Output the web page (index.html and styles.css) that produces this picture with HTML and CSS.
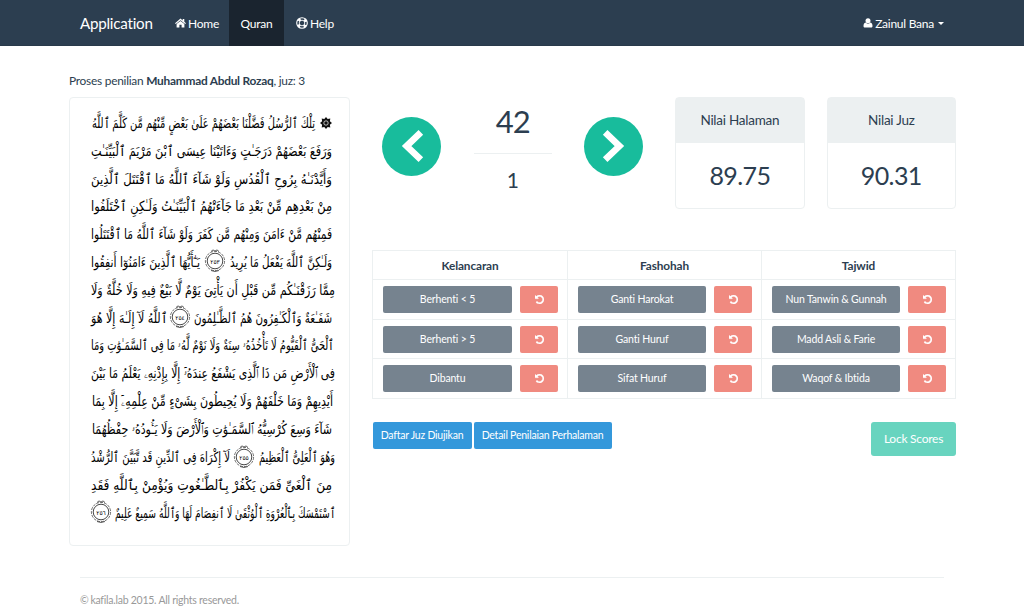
FILE: index.html
```
<!DOCTYPE html>
<html lang="id">
<head>
<meta charset="utf-8">
<title>Application</title>
<link rel="stylesheet" href="styles.css">
</head>
<body>
<svg class="defs" aria-hidden="true">
  <symbol id="undo" viewBox="0 128 1536 1536"><path fill="#fff" stroke="#fff" stroke-width="50" d="M1536 896q0 156-61 298t-164 245-245 164-298 61q-172 0-327-72.500t-264-204.500q-7-10-6.500-22.500t8.500-20.500l137-138q10-9 25-9 16 2 23 12 73 95 179 147t225 52q104 0 198.500-40.500t163.500-109.500 109.500-163.500 40.500-198.500-40.500-198.500-109.500-163.500-163.500-109.500-198.500-40.500q-98 0-188 35.500t-160 101.500l137 138q31 30 14 69-17 40-59 40h-448q-26 0-45-19t-19-45v-448q0-42 40-59 39-17 69 14l130 129q107-101 244.500-156.500t284.500-55.500q156 0 298 61t245 164 164 245 61 298z"/></symbol>
  <symbol id="ayah" viewBox="-11 -12 22 24"><g fill="none" stroke="#333"><circle r="7.800" stroke-width=".9"/><circle r="9.600" stroke-width=".7" stroke-dasharray="3 1"/><path d="M-4-9.500l2-1.600 2 1.200 2-1.200 2 1.600M-4 9.500l4 1 4-1" stroke-width=".8"/></g></symbol>
</svg>
<nav class="navbar">
  <a class="brand">Application</a>
  <a class="nav-item home"><svg class="icon-home" viewBox="0 0 11 10"><path d="M5.500.5L0 5.200l.8.900L5.500 2.200l4.700 3.900.8-.9-1.700-1.500V.9H7.700v1.500z"/><path d="M1.600 6.100l3.900-3.200 3.900 3.200v3.400H6.600V6.800H4.400v2.700H1.600z"/></svg>Home</a>
  <a class="nav-item active">Quran</a>
  <a class="nav-item help"><svg class="icon-help" viewBox="0 0 12 12"><circle cx="6" cy="6" r="4" fill="none" stroke="#fff" stroke-width="2.800" stroke-dasharray="2.500 3.783" stroke-dashoffset="-1.890"/><circle cx="6" cy="6" r="5.300" fill="none" stroke="#fff" stroke-width="1.100"/><circle cx="6" cy="6" r="2.800" fill="none" stroke="#fff" stroke-width=".9"/></svg>Help</a>
  <a class="nav-item user"><svg class="icon-user" viewBox="0 0 9 10"><circle cx="4.500" cy="2.800" r="2.500"/><path d="M2 4.600C.6 5 0 6.400 0 8c0 1 .6 1.600 1.500 1.600h6C8.400 9.600 9 9 9 8c0-1.600-.6-3-2-3.400-1.300 1.500-3.700 1.500-5 0z"/></svg>Zainul Bana<span class="caret"></span></a>
</nav>
<main class="container">
  <p class="lead">Proses penilian <b>Muhammad Abdul Rozaq</b>, juz: 3</p>
  <div class="columns">
    <section class="page-card">
      <svg class="mushaf" width="279" height="447" viewBox="70 98 279 447" direction="rtl">
        <g stroke="#111" fill="none" transform="translate(326 123)"><path d="M0-6l1.700 2 2.600-.4-.4 2.600L6 0 3.900 1.800l.4 2.600-2.600-.4L0 6l-1.700-2-2.600.4.400-2.600L-6 0l2.100-1.800-.4-2.600 2.600.4z" fill="#111" stroke="none"/><circle r="2.200" stroke="#fff" stroke-width=".7"/></g>
        <text x="315" y="128" textLength="223" lengthAdjust="spacingAndGlyphs">تِلْكَ ٱلرُّسُلُ فَضَّلْنَا بَعْضَهُمْ عَلَىٰ بَعْضٍ مِّنْهُم مَّن كَلَّمَ ٱللَّهُ</text>
        <text x="332" y="156" textLength="241" lengthAdjust="spacingAndGlyphs">وَرَفَعَ بَعْضَهُمْ دَرَجَـٰتٍ وَءَاتَيْنَا عِيسَى ٱبْنَ مَرْيَمَ ٱلْبَيِّنَـٰتِ</text>
        <text x="332" y="184" textLength="241" lengthAdjust="spacingAndGlyphs">وَأَيَّدْنَـٰهُ بِرُوحِ ٱلْقُدُسِ وَلَوْ شَآءَ ٱللَّهُ مَا ٱقْتَتَلَ ٱلَّذِينَ</text>
        <text x="332" y="211" textLength="241" lengthAdjust="spacingAndGlyphs">مِنْ بَعْدِهِم مِّنْ بَعْدِ مَا جَآءَتْهُمُ ٱلْبَيِّنَـٰتُ وَلَـٰكِنِ ٱخْتَلَفُوا</text>
        <text x="332" y="239" textLength="241" lengthAdjust="spacingAndGlyphs">فَمِنْهُم مَّنْ ءَامَنَ وَمِنْهُم مَّن كَفَرَ وَلَوْ شَآءَ ٱللَّهُ مَا ٱقْتَتَلُوا</text>
        <text x="332" y="267" textLength="102" lengthAdjust="spacingAndGlyphs">وَلَـٰكِنَّ ٱللَّهَ يَفْعَلُ مَا يُرِيدُ</text>
        <text x="200" y="267" textLength="109" lengthAdjust="spacingAndGlyphs">يَـٰٓأَيُّهَا ٱلَّذِينَ ءَامَنُوٓا أَنفِقُوا</text>
        <text x="335" y="295" textLength="244" lengthAdjust="spacingAndGlyphs">مِمَّا رَزَقْنَـٰكُم مِّن قَبْلِ أَن يَأْتِىَ يَوْمٌ لَّا بَيْعٌ فِيهِ وَلَا خُلَّةٌ وَلَا</text>
        <text x="332" y="323" textLength="138" lengthAdjust="spacingAndGlyphs">شَفَـٰعَةٌ وَٱلْكَـٰفِرُونَ هُمُ ٱلظَّـٰلِمُونَ</text>
        <text x="167" y="323" textLength="76" lengthAdjust="spacingAndGlyphs">ٱللَّهُ لَآ إِلَـٰهَ إِلَّا هُوَ</text>
        <text x="334" y="350" textLength="243" lengthAdjust="spacingAndGlyphs">ٱلْحَىُّ ٱلْقَيُّومُ لَا تَأْخُذُهُۥ سِنَةٌ وَلَا نَوْمٌ لَّهُۥ مَا فِى ٱلسَّمَـٰوَٰتِ وَمَا</text>
        <text x="335" y="378" textLength="244" lengthAdjust="spacingAndGlyphs">فِى ٱلْأَرْضِ مَن ذَا ٱلَّذِى يَشْفَعُ عِندَهُۥٓ إِلَّا بِإِذْنِهِۦ يَعْلَمُ مَا بَيْنَ</text>
        <text x="333" y="406" textLength="241" lengthAdjust="spacingAndGlyphs">أَيْدِيهِمْ وَمَا خَلْفَهُمْ وَلَا يُحِيطُونَ بِشَىْءٍ مِّنْ عِلْمِهِۦٓ إِلَّا بِمَا</text>
        <text x="332" y="434" textLength="240" lengthAdjust="spacingAndGlyphs">شَآءَ وَسِعَ كُرْسِيُّهُ ٱلسَّمَـٰوَٰتِ وَٱلْأَرْضَ وَلَا يَـُٔودُهُۥ حِفْظُهُمَا</text>
        <text x="335" y="462" textLength="76" lengthAdjust="spacingAndGlyphs">وَهُوَ ٱلْعَلِىُّ ٱلْعَظِيمُ</text>
        <text x="230" y="462" textLength="139" lengthAdjust="spacingAndGlyphs">لَآ إِكْرَاهَ فِى ٱلدِّينِ قَد تَّبَيَّنَ ٱلرُّشْدُ</text>
        <text x="332" y="490" textLength="241" lengthAdjust="spacingAndGlyphs">مِنَ ٱلْغَىِّ فَمَن يَكْفُرْ بِٱلطَّـٰغُوتِ وَيُؤْمِنْ بِٱللَّهِ فَقَدِ</text>
        <text x="335" y="518" textLength="220" lengthAdjust="spacingAndGlyphs">ٱسْتَمْسَكَ بِٱلْعُرْوَةِ ٱلْوُثْقَىٰ لَا ٱنفِصَامَ لَهَا وَٱللَّهُ سَمِيعٌ عَلِيمٌ</text>
        <use href="#ayah" x="204" y="249" width="22" height="24"/><text class="num" x="215" y="264">٢٥٣</text>
        <use href="#ayah" x="169" y="305" width="22" height="24"/><text class="num" x="180" y="320">٢٥٤</text>
        <use href="#ayah" x="233" y="445" width="22" height="24"/><text class="num" x="244" y="460">٢٥٥</text>
        <use href="#ayah" x="90" y="500" width="22" height="24"/><text class="num" x="101" y="515">٢٥٦</text>
      </svg>
    </section>
    <section class="panel">
      <div class="summary">
        <a class="round"><svg viewBox="0 0 58 58"><path d="M38.200 15.200L24.200 28.600l14 13.400" /></svg></a>
        <div class="counter"><div class="page-no">42</div><div class="step">1</div></div>
        <a class="round next"><svg viewBox="0 0 58 58"><path d="M20.800 15.200l14 13.400-14 13.400" /></svg></a>
        <div class="score"><div class="score-head">Nilai Halaman</div><div class="score-value">89.75</div></div>
        <div class="score last"><div class="score-head">Nilai Juz</div><div class="score-value">90.31</div></div>
      </div>
      <div class="grid">
        <div class="th">Kelancaran</div><div class="th">Fashohah</div><div class="th">Tajwid</div>
        <div class="td"><a class="btn">Berhenti &lt; 5</a><a class="undo"><svg><use href="#undo"/></svg></a></div>
        <div class="td"><a class="btn">Ganti Harokat</a><a class="undo"><svg><use href="#undo"/></svg></a></div>
        <div class="td"><a class="btn">Nun Tanwin &amp; Gunnah</a><a class="undo"><svg><use href="#undo"/></svg></a></div>
        <div class="td"><a class="btn">Berhenti &gt; 5</a><a class="undo"><svg><use href="#undo"/></svg></a></div>
        <div class="td"><a class="btn">Ganti Huruf</a><a class="undo"><svg><use href="#undo"/></svg></a></div>
        <div class="td"><a class="btn">Madd Asli &amp; Farie</a><a class="undo"><svg><use href="#undo"/></svg></a></div>
        <div class="td"><a class="btn">Dibantu</a><a class="undo"><svg><use href="#undo"/></svg></a></div>
        <div class="td"><a class="btn">Sifat Huruf</a><a class="undo"><svg><use href="#undo"/></svg></a></div>
        <div class="td"><a class="btn">Waqof &amp; Ibtida</a><a class="undo"><svg><use href="#undo"/></svg></a></div>
      </div>
      <div class="actions">
        <a class="info first">Daftar Juz Diujikan</a><a class="info second">Detail Penilaian Perhalaman</a>
        <a class="lock">Lock Scores</a>
      </div>
    </section>
  </div>
  <footer class="footer"><span class="copy">©</span> kafila.lab 2015. All rights reserved.</footer>
</main>
</body>
</html>
```
FILE: styles.css
```
* { box-sizing: border-box; }
body { margin: 0; width: 1024px; height: 615px; overflow: hidden; background: #fff; color: #2c3e50; font: 12px/17px Lato, sans-serif; letter-spacing: -.25px; }
.defs { display: none; }
.navbar { display: flex; height: 46px; padding-left: 80px; background: #2c3e50; border-bottom: 1px solid #293a4a; color: #fff; line-height: 47px; }
.brand { width: 84px; font-size: 15.200px; }
.nav-item { display: flex; align-items: center; height: 46px; white-space: nowrap; }
.nav-item svg { fill: #fff; }
.home { width: 65px; padding-left: 11px; }
.icon-home { width: 11px; height: 10px; margin-right: 2px; }
.active { width: 55px; justify-content: center; background: #1a242f; }
.help { padding-left: 12px; }
.icon-help { width: 12px; height: 12px; margin-right: 2px; }
.user { margin-left: auto; margin-right: 80px; }
.icon-user { width: 10px; height: 10px; margin-right: 2px; }
.caret { margin-left: 4px; border: 3px solid transparent; border-top-color: #fff; border-bottom: 0; }
.container { padding: 0 68px 0 69px; }
.lead { margin: 0; padding-top: 26px; height: 51px; font-size: 11.900px; }
.columns { display: flex; gap: 22.500px; }
.page-card { flex: none; width: 281px; height: 449px; border: 1px solid #ecf0f1; border-radius: 4px; }
.mushaf { display: block; overflow: visible; letter-spacing: 0; }
.mushaf text { font: 14px "DejaVu Sans", serif; fill: #000; }
.mushaf .num { font-size: 6px; text-anchor: middle; }
.panel { width: 583.500px; }
.summary { display: flex; height: 153px; }
.round { flex: none; width: 59px; height: 59px; margin: 20px 0 0 9.500px; border-radius: 50%; background: #18bc9c; }
.round path { fill: none; stroke: #fff; stroke-width: 6.500px; }
.counter { width: 79px; margin-left: 32.500px; text-align: center; }
.page-no { height: 57px; padding-top: 6px; border-bottom: 1px solid #ecf0f1; font-size: 31px; line-height: 37px; letter-spacing: -.8px; }
.step { padding-top: 13px; font-size: 21px; line-height: 26px; }
.next { margin-left: 31.500px; }
.score { width: 130px; height: 112px; margin-left: 32.500px; border: 1px solid #ecf0f1; border-radius: 4px; text-align: center; }
.last { margin-left: 22px; }
.score-head { height: 45px; background: #ecf0f1; font-size: 13.500px; line-height: 45px; letter-spacing: -.25px; }
.score-value { font-size: 25px; line-height: 65px; letter-spacing: -.6px; }
.grid { display: grid; grid-template-columns: 195px 194px 194px; grid-template-rows: 29px 40px 39px 40px; width: 584px; margin-left: -.5px; border-left: 1px solid #ecf0f1; border-top: 1px solid #ecf0f1; }
.th, .td { border-right: 1px solid #ecf0f1; border-bottom: 1px solid #ecf0f1; }
.th { text-align: center; font-weight: bold; font-size: 11.800px; line-height: 29px; letter-spacing: -.1px; }
.td { display: flex; gap: 8px; padding: 6px 9px 0 10px; }
.btn { flex: 1; height: 27px; border-radius: 2px; background: #76838f; color: #fff; text-align: center; font-size: 10.500px; line-height: 26px; letter-spacing: -.15px; }
.undo { display: flex; width: 38px; height: 27px; border-radius: 2px; background: #f08a80; }
.undo svg { width: 9px; height: 9px; margin: 9px auto; }
.actions { display: flex; padding-top: 23px; }
.info { height: 27px; border-radius: 2px; background: #3498db; color: #fff; text-align: center; font-size: 10.500px; line-height: 26px; letter-spacing: -.23px; }
.first { width: 99px; margin-right: 2px; }
.second { width: 138px; }
.lock { width: 85px; height: 34px; margin-left: auto; border-radius: 3px; background: #68d4bf; color: #fff; text-align: center; font-size: 12px; line-height: 34px; }
.footer { height: 40px; margin: 31px 12px 0 11px; padding-top: 14px; border-top: 1px solid #ecf0f1; color: #999; font-size: 10.500px; }
.copy { font-size: 10.500px; letter-spacing: -.8px; }
```
